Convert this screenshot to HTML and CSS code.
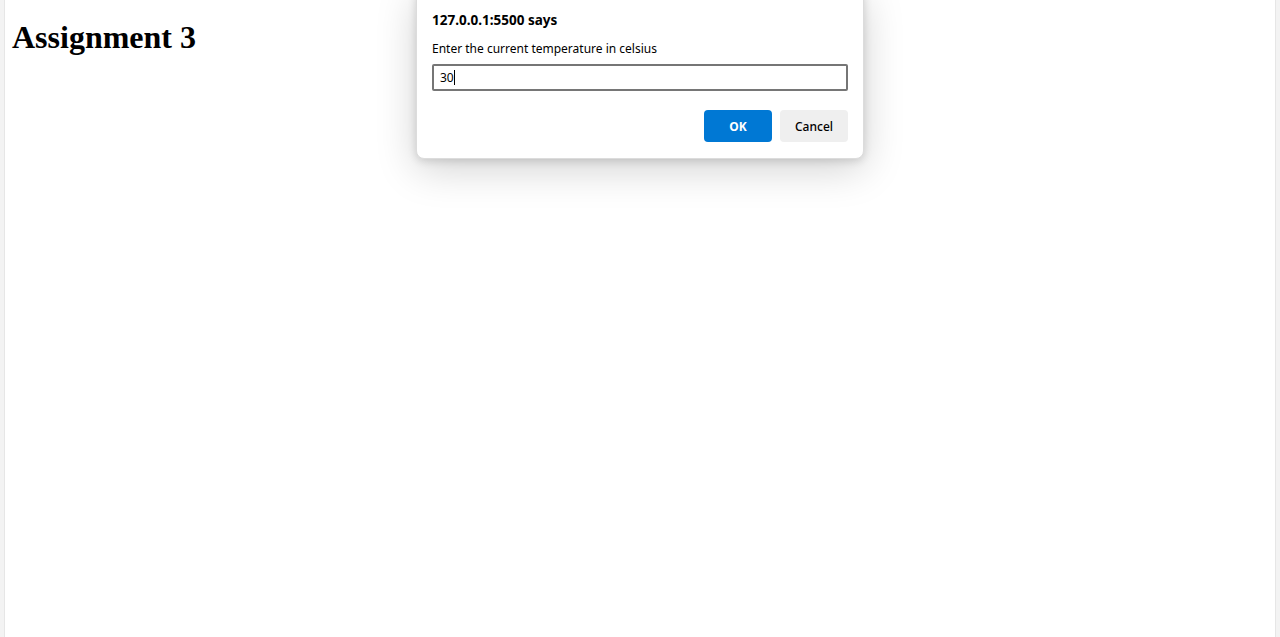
FILE: index.html
```html
<!DOCTYPE html>
<html>
<head>
<meta charset="utf-8">
<link rel="stylesheet" href="styles.css">
</head>
<body>
<div class="viewport">
  <h1 class="title">Assignment 3</h1>
  <div class="dialog">
    <div class="dlg-title">127.0.0.1:5500 says</div>
    <div class="dlg-msg">Enter the current temperature in celsius</div>
    <div class="dlg-input"><span class="val">30</span><span class="caret"></span></div>
    <div class="dlg-actions">
      <button class="btn btn-ok">OK</button>
      <button class="btn btn-cancel">Cancel</button>
    </div>
  </div>
</div>
</body>
</html>
```
FILE: styles.css
```css
html, body {
  margin: 0;
  padding: 0;
  height: 100%;
  overflow: hidden;
  background: #f3f3f3;
}
.viewport {
  position: relative;
  margin: 0 4px 0 4px;
  height: 637px;
  background: #ffffff;
  border-left: 1px solid #e6e6e6;
  border-right: 1px solid #e6e6e6;
  padding: 8px 7px;
  box-sizing: border-box;
}
.title {
  font-family: "Liberation Serif", serif;
  font-size: 32px;
  font-weight: bold;
  margin: 11px 0 0 0;
  line-height: 37px;
  color: #000;
}
.dialog {
  position: absolute;
  left: 411px;
  top: -12px;
  width: 448px;
  height: 171px;
  box-sizing: border-box;
  background: #fff;
  border: 1px solid #dcdcdc;
  border-radius: 8px;
  box-shadow: 0 10px 40px rgba(0,0,0,0.18), 0 2px 8px rgba(0,0,0,0.14);
  padding: 23px 15px 0 15px;
  font-family: "Noto Sans", "Open Sans", sans-serif;
  color: #000;
}
.dlg-title {
  font-size: 13.5px;
  font-weight: bold;
  line-height: 17px;
}
.dlg-msg {
  font-size: 12px;
  line-height: 17px;
  margin-top: 11px;
}
.dlg-input {
  margin-top: 7px;
  height: 27px;
  box-sizing: border-box;
  border: 2px solid #767676;
  border-radius: 2px;
  display: flex;
  align-items: center;
  padding-left: 6px;
  font-size: 12px;
}
.caret {
  display: inline-block;
  width: 1px;
  height: 15px;
  background: #000;
}
.dlg-actions {
  display: flex;
  justify-content: flex-end;
  gap: 8px;
  margin-top: 19px;
}
.btn {
  width: 68px;
  height: 32px;
  border: none;
  border-radius: 4px;
  font-family: "Noto Sans", "Open Sans", sans-serif;
  font-size: 12px;
  padding: 0;
}
.btn-ok {
  background: #0078d4;
  color: #fff;
  font-weight: bold;
}
.btn-cancel {
  background: #efefef;
  color: #000;
  font-weight: 500;
}
```
